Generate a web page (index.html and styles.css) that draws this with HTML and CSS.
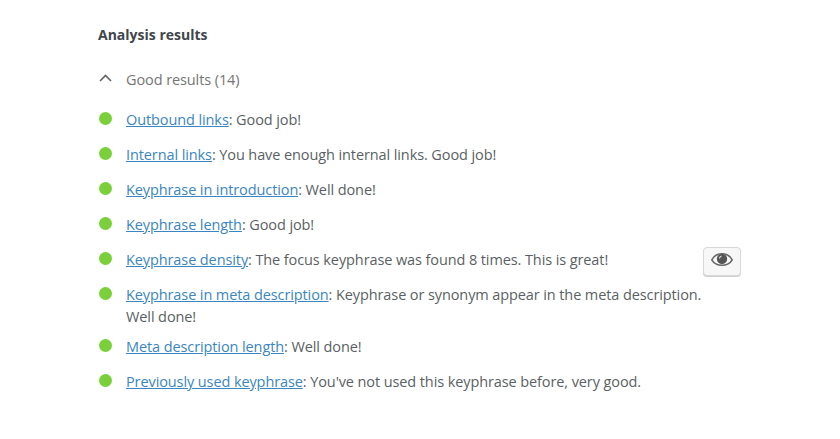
FILE: index.html
```html
<!DOCTYPE html>
<html lang="en">
<head>
<meta charset="utf-8">
<title>Analysis results</title>
<link rel="stylesheet" href="styles.css">
</head>
<body>
<main class="analysis">
  <h1 class="title">Analysis results</h1>
  <div class="group">
    <svg class="chevron" viewBox="0 0 14 10"><path d="M2 8 7.500 2.500 13 8"/></svg>
    <span>Good results (14)</span>
  </div>
  <ul class="results">
    <li class="result"><i class="dot"></i><p><a href="#">Outbound links</a>: Good job!</p></li>
    <li class="result"><i class="dot"></i><p><a href="#">Internal links</a>: You have enough internal links. Good job!</p></li>
    <li class="result"><i class="dot"></i><p><a href="#">Keyphrase in introduction</a>: Well done!</p></li>
    <li class="result"><i class="dot"></i><p><a href="#">Keyphrase length</a>: Good job!</p></li>
    <li class="result"><i class="dot"></i><p><a href="#">Keyphrase density</a>: The focus keyphrase was found 8 times. This is great!</p>
      <button class="eye" aria-label="Highlight this result"><svg viewBox="0 0 24 16"><path class="lid" d="M1.800 7.800C6-.2 18-.2 22.200 7.800 18 15 6 15 1.800 7.800Z"/><circle class="iris" cx="12" cy="6.900" r="5.200"/><path class="glint" d="M9.500 6.500A2.500 2.500 0 0 1 11.500 4.200"/></svg></button></li>
    <li class="result"><i class="dot"></i><p><a href="#">Keyphrase in meta description</a>: Keyphrase or synonym appear in the meta description.<br>Well done!</p></li>
    <li class="result"><i class="dot"></i><p><a href="#">Meta description length</a>: Well done!</p></li>
    <li class="result"><i class="dot"></i><p><a href="#">Previously used keyphrase</a>: You've not used this keyphrase before, very good.</p></li>
  </ul>
</main>
</body>
</html>
```
FILE: styles.css
```css
* { box-sizing: border-box; }
body { margin: 0; background: #fff; color: #5b5f64; font: 14.5px/22.4px "Open Sans", sans-serif; letter-spacing: -0.1px; }
.analysis { width: 643px; margin-left: 98px; padding-top: 24px; }
.title { margin: 0; font-size: 14px; line-height: 22px; font-weight: 700; letter-spacing: 0; color: #40464c; }
.group { display: flex; align-items: center; margin-top: 22px; height: 24px; color: #757575; }
.chevron { width: 14px; height: 10px; margin: -4px 14px 0 0; fill: none; stroke: #666; stroke-width: 1.7; }
.results { list-style: none; margin: 17px 0 0; padding: 0; }
.result { display: flex; align-items: flex-start; min-height: 34.950px; padding-bottom: 7.500px; }
.dot { flex: none; width: 13px; height: 13px; margin: 3px 14px 0 1px; border-radius: 50%; background: #7ad03a; }
p { flex: none; width: 577px; margin: 0; white-space: nowrap; }
a { color: #3b86c0; text-decoration: underline; }
.eye { width: 38px; height: 29px; margin: -2px 0 -10px; padding: 0 0 2px; display: grid; place-items: center; border: 1px solid #d8d8d8; border-radius: 4px; background: #f7f7f7; box-shadow: 0 1px 0 #d0d0d0; }
.eye svg { width: 24px; height: 16px; }
.lid { fill: #f7f7f7; stroke: #666; stroke-width: 1.600; }
.iris { fill: #555; }
.glint { fill: none; stroke: #ddd; stroke-width: 1.200; }
```
